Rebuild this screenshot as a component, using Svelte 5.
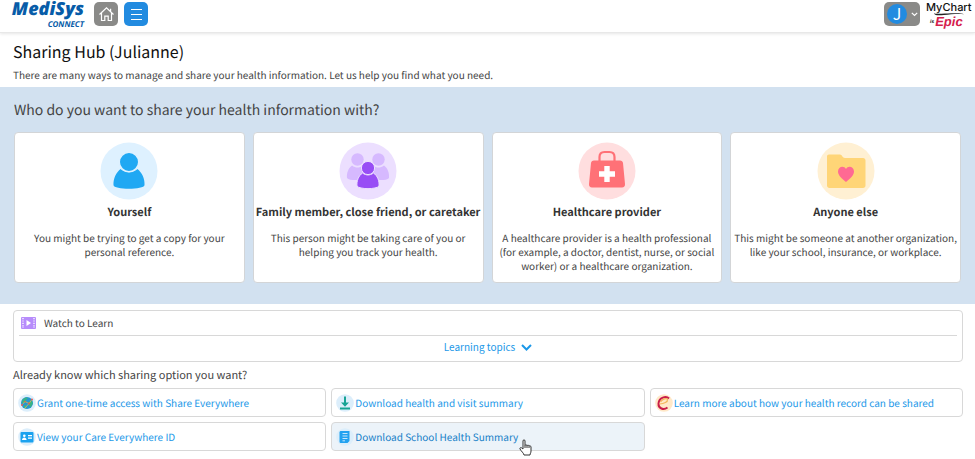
<script lang="ts">
  type Icon = 'self' | 'family' | 'provider' | 'folder';

  interface Audience {
    icon: Icon;
    title: string;
    text: string;
  }

  interface Option {
    icon: string;
    label: string;
    active?: boolean;
  }

  const audiences: Audience[] = [
    {
      icon: 'self',
      title: 'Yourself',
      text: 'You might be trying to get a copy for your personal reference.'
    },
    {
      icon: 'family',
      title: 'Family member, close friend, or caretaker',
      text: 'This person might be taking care of you or helping you track your health.'
    },
    {
      icon: 'provider',
      title: 'Healthcare provider',
      text: 'A healthcare provider is a health professional (for example, a doctor, dentist, nurse, or social worker) or a healthcare organization.'
    },
    {
      icon: 'folder',
      title: 'Anyone else',
      text: 'This might be someone at another organization, like your school, insurance, or workplace.'
    }
  ];

  const options: Option[] = [
    { icon: 'globe', label: 'Grant one-time access with Share Everywhere' },
    { icon: 'download', label: 'Download health and visit summary' },
    { icon: 'record', label: 'Learn more about how your health record can be shared' },
    { icon: 'card', label: 'View your Care Everywhere ID' },
    { icon: 'document', label: 'Download School Health Summary', active: true }
  ];

  let topicsOpen = $state(false);
</script>

<header class="topbar">
  <a class="brand" href="#home" aria-label="MediSys Connect">
    <span class="brand-name">MediSys</span>
    <span class="brand-sub">CONNECT</span>
  </a>
  <button class="icon-button home" aria-label="Home">
    <svg width="17" height="17" viewBox="0 0 17 17" fill="none" stroke="#fff" stroke-width="1.2">
      <path d="M1.5 8.5 8.5 1.8l7 6.7M3.5 7v7.5h3.3v-4.3h3.4v4.3h3.3V7M12.6 5.2V2.8" />
    </svg>
  </button>
  <button class="icon-button menu" aria-label="Menu">
    <svg width="13" height="13" viewBox="0 0 13 13" fill="none" stroke="#fff" stroke-width="1.2">
      <path d="M1 1.5h11M1 6.5h11M1 11.5h11" />
    </svg>
  </button>
  <button class="account" aria-label="Account menu">
    <span class="avatar">J</span>
    <svg width="7" height="5" viewBox="0 0 7 5" fill="none" stroke="#fff" stroke-width="1.2">
      <path d="m.8.8 2.7 2.7L6.2.8" />
    </svg>
  </button>
  <a class="mychart" href="#mychart" aria-label="MyChart is Epic">
    <span class="mychart-name">MyChart</span>
    <svg class="swoosh" width="44" height="3" viewBox="0 0 44 3">
      <path d="M8 0c1 1.500 10 .6 17 .3 6-.3 11-.2 13 .9-7-.6-14 .2-20 .8-6 .6-10 .6-10-2z" fill="#222" />
    </svg>
    <span class="mychart-tag"><span class="mychart-is">is</span><span class="mychart-epic">Epic</span></span>
  </a>
</header>

<main>
  <section class="intro">
    <h1>Sharing Hub (Julianne)</h1>
    <p>There are many ways to manage and share your health information. Let us help you find what you need.</p>
  </section>

  <section class="audience">
    <h2>Who do you want to share your health information with?</h2>
    <div class="cards">
      {#each audiences as item (item.icon)}
        <a class="card" href="#{item.icon}">
          <svg width="58" height="58" viewBox="0 0 58 58">
            {#if item.icon === 'self'}
              <circle cx="29" cy="29" r="28.5" fill="#def1ff" />
              <path d="M20.5 27c5 4.400 12 4.400 17 0 4.500 3.500 7.500 10 7 16-.2 5-31 5-31 0-.4-6 2.500-12.500 7-16z" fill="#20a8f3" />
              <circle cx="29" cy="20" r="9.700" fill="#20a8f3" stroke="#def1ff" stroke-width="1.400" />
            {:else if item.icon === 'family'}
              <circle cx="29" cy="29" r="28.5" fill="#ecdfff" />
              <g fill="#d6b9ff">
                <circle cx="18.500" cy="17.500" r="6.200" />
                <circle cx="39.500" cy="17.500" r="6.200" />
                <path d="M13 23.500c4 2.700 7 2.700 11 0l5 5 5-5c4 2.700 7 2.700 11 0 4 3 5.500 8 5 12.500-2 2.500-10 2.500-13 1.500H21c-3 1-11 1-13-1.500-.5-4.500 1-9.500 5-12.500z" />
              </g>
              <path d="M23.500 31c3.500 2.600 7.500 2.600 11 0 4 2.700 6 8 5.500 13-2 3.500-20 3.500-22 0-.5-5 1.500-10.300 5.500-13z" fill="#984df5" stroke="#ecdfff" stroke-width="1" />
              <circle cx="29" cy="26" r="6.600" fill="#984df5" stroke="#ecdfff" stroke-width="1" />
            {:else if item.icon === 'provider'}
              <circle cx="29" cy="29" r="28.5" fill="#ffdedf" />
              <path d="M21.500 19v-4c0-3 2-5 5-5h5c3 0 5 2 5 5v4" fill="none" stroke="#ff7177" stroke-width="2.200" />
              <path d="M16 18.500h26c1.800 0 2.700 1 3 2.500l2 21c.2 2-1 3.500-3 3.500H14c-2 0-3.200-1.500-3-3.500l2-21c.3-1.500 1.200-2.500 3-2.500z" fill="#ff7177" />
              <path d="M26.300 24h5.400v5.300H37v5.400h-5.300V40h-5.400v-5.300H21v-5.400h5.300z" fill="#fff" />
            {:else}
              <circle cx="29" cy="29" r="28.5" fill="#fff0d3" />
              <path d="M12 12.500h11c2 0 2.500 3.500 5 3.500h18c1.500 0 2.500 1 2.500 2.500v25c0 1.500-1 2.500-2.500 2.500H12.500c-1.500 0-2.500-1-2.500-2.500v-29c0-1.200.8-2 2-2z" fill="#ffd577" />
              <path d="M29 40c-4-3.500-8-6.500-8-10.500 0-5 6-6.300 8-2.500 2-3.800 8-2.500 8 2.500 0 4-4 7-8 10.500z" fill="#ff6a93" />
            {/if}
          </svg>
          <h3>{item.title}</h3>
          <p>{item.text}</p>
        </a>
      {/each}
    </div>
  </section>

  <section class="learn">
    <div class="learn-head">
      <svg width="15" height="12" viewBox="0 0 15 12">
        <rect width="15" height="12" rx="1" fill="#b78cfb" />
        <path d="M2 1v10M13 1v10" stroke="#fff" stroke-width="1.300" stroke-dasharray="1.200 1.200" />
        <path d="M5.500 3v6l4.500-3z" fill="#fff" />
      </svg>
      <span>Watch to Learn</span>
    </div>
    <button class="topics" aria-expanded={topicsOpen} onclick={() => (topicsOpen = !topicsOpen)}>
      Learning topics
      <svg width="11" height="7" viewBox="0 0 11 7" fill="none" stroke="#1c98e8" stroke-width="2">
        <path d="m1 1 4.500 4.500L10 1" />
      </svg>
    </button>
  </section>

  <section class="options">
    <h2>Already know which sharing option you want?</h2>
    <div class="option-grid">
      {#each options as option (option.icon)}
        <a class="option" class:active={option.active} href="#{option.icon}">
          <svg width="18" height="18" viewBox="0 0 18 18">
            <circle cx="9" cy="9" r="8.800" fill={option.icon === 'record' ? '#ffe8c8' : '#dceefb'} />
            {#if option.icon === 'globe'}
              <circle cx="9" cy="9" r="6" fill="#2596d1" />
              <path d="M4.500 5.500 8 3.200l1.800 1.300-2 1.500.8 2-3 1.500-1.800-.8zM10.500 8l3-2 1.300 3.500-2 3.800-2.300-2zM6 11l3 1-.5 2.500-2.500-.8z" fill="#39b385" />
              <path d="m4 11 3-3.500 4 2 3-4M7 14l4-4.500" fill="none" stroke="#efb456" stroke-width=".7" />
              <g fill="#e9574f"><circle cx="4" cy="11" r=".9" /><circle cx="7" cy="7.500" r=".8" /><circle cx="11" cy="9.500" r=".9" /><circle cx="14" cy="5.500" r=".9" /></g>
            {:else if option.icon === 'download'}
              <path d="M8 2.500h2v6h3l-4 4.300-4-4.300h3zM4 13.500h10v2H4z" fill="#16a394" />
            {:else if option.icon === 'record'}
              <path d="M14 4.500C11 1.500 4 3.500 3.500 9.500c-.3 5 5 7 9 4" fill="none" stroke="#c91e48" stroke-width="2" />
              <path d="M4.500 10C9 9.500 13 8 12.500 5.500 12 3.500 7 5 5.500 8" fill="none" stroke="#f3b65b" stroke-width="1.200" />
            {:else if option.icon === 'card'}
              <rect x="2.500" y="4" width="13" height="10.500" rx="1" fill="#1ba2ef" />
              <circle cx="6.300" cy="7.800" r="1.300" fill="#fff" />
              <path d="M4 12c0-3.500 4.600-3.500 4.600 0zM10 7h4v1.300h-4zM10 9.500h4v1.300h-4z" fill="#fff" />
            {:else}
              <path d="M5 3h8.500v10l-2 2H5c-1 0-1.500-.5-1.500-1.500V4.500C3.500 3.500 4 3 5 3z" fill="#22a2f0" />
              <path d="M6.500 5.500h5M6.500 8h5M6.500 10.500h5M6.500 12.800h2.500" stroke="#c5e7fc" stroke-width="1" />
            {/if}
          </svg>
          <span class="option-label">{option.label}</span>
          {#if option.active}
            <svg class="pointer" width="13" height="17" viewBox="0 0 13 17">
              <path d="M4 10V2c0-1.600 2-1.600 2 0v4.500c.2-1 2-1 2 .3.300-1 2-.8 2 .4.400-.8 2-.5 2 .8v4c0 2-1 2.500-1 4H5c0-1.500-3-4-4-6-.5-1.200 1-2 2-.8zM6 6.500V9M8 6.800V9M10 7.200V9" fill="#fff" stroke="#333" stroke-width="1" />
            </svg>
          {/if}
        </a>
      {/each}
    </div>
  </section>
</main>

<style>
  :global(body) {
    margin: 0;
    background: #fff;
    color: #444;
    font-family: "Noto Sans CJK SC", "Open Sans", sans-serif;
    font-size: 10px;
    line-height: 14px;
    text-rendering: geometricPrecision;
  }

  h1, h2, h3, p {
    margin: 0;
    font-weight: 400;
  }

  a {
    color: inherit;
    text-decoration: none;
  }

  svg {
    display: block;
    flex: none;
  }

  button {
    border: 0;
    padding: 0;
    font: inherit;
    cursor: pointer;
  }

  .topbar {
    display: flex;
    align-items: flex-start;
    gap: 6px;
    height: 30px;
    padding: 2px 5px 0 12px;
    border-bottom: 1px solid #e8e8e8;
    box-shadow: 0 1px 3px #e6e6e6;
  }

  .brand {
    display: flex;
    flex-direction: column;
    align-items: flex-end;
    gap: 4px;
    width: 72px;
    margin-right: 4px;
    color: #075ca8;
    font-family: "Noto Sans", sans-serif;
    font-style: italic;
    font-weight: 700;
  }

  .brand-name {
    font-size: 18px;
    font-weight: 900;
    line-height: 15px;
  }

  .brand-sub {
    font-size: 8px;
    line-height: 8px;
  }

  .icon-button {
    display: flex;
    align-items: center;
    justify-content: center;
    width: 24px;
    height: 24px;
    border-radius: 5px;
  }

  .home {
    background: #8a8a88;
  }

  .menu {
    background: #228be0;
  }

  .account {
    display: flex;
    align-items: center;
    gap: 4px;
    width: 36px;
    height: 24px;
    margin-left: auto;
    padding-left: 3px;
    border-radius: 5px;
    background: #8a8a88;
  }

  .avatar {
    width: 20px;
    height: 20px;
    border-radius: 50%;
    background: #228be0;
    color: #fff;
    font-size: 16px;
    line-height: 18px;
    text-align: center;
  }

  .mychart {
    display: flex;
    flex-direction: column;
    width: 44px;
    color: #111;
  }

  .mychart-name {
    font: 500 11px/11px Inter, sans-serif;
  }

  .mychart-tag {
    display: flex;
    align-items: center;
    gap: 1px;
    padding-left: 4px;
    font-family: "Liberation Sans", sans-serif;
    font-style: italic;
    font-weight: 700;
  }

  .mychart-is {
    font-size: 5px;
    line-height: 6px;
  }

  .mychart-epic {
    color: #d5204c;
    font-size: 13px;
    font-weight: 700;
    line-height: 11px;
  }

  .intro {
    padding: 6px 13px 5px;
  }

  h1 {
    color: #111;
    font-size: 16px;
    line-height: 24px;
  }

  .intro p {
    margin-top: 5px;
  }

  .audience {
    padding: 11px 14px 21px;
    background: #d2e1f0;
  }

  .audience h2 {
    font-size: 14px;
    line-height: 24px;
  }

  .cards {
    display: grid;
    grid-template-columns: repeat(4, minmax(0, 1fr));
    gap: 8px;
    margin-top: 10px;
  }

  .card {
    display: flex;
    flex-direction: column;
    align-items: center;
    padding: 9px 2px;
    border: 1px solid #d3d5d7;
    border-radius: 4px;
    background: #fff;
    text-align: center;
  }

  .card h3 {
    margin: 3px 0 10px;
    color: #333;
    font-size: 11px;
    font-weight: 600;
    line-height: 18px;
    white-space: nowrap;
  }

  .learn {
    margin: 6px 12px 0 13px;
    padding: 0 5px 3px;
    border: 1px solid #d8d8d8;
    border-radius: 4px;
  }

  .learn-head {
    display: flex;
    align-items: center;
    gap: 8px;
    height: 24px;
    padding-left: 2px;
    border-bottom: 1px solid #d8d8d8;
  }

  .topics {
    display: flex;
    align-items: center;
    justify-content: center;
    gap: 6px;
    width: 100%;
    height: 22px;
    background: none;
    color: #1c98e8;
  }

  .options {
    padding: 3px 12px 8px 13px;
  }

  .options h2 {
    font-size: 11px;
    line-height: 20px;
  }

  .option-grid {
    display: grid;
    grid-template-columns: repeat(3, 1fr);
    gap: 5px;
    margin-top: 3px;
  }

  .option {
    position: relative;
    display: flex;
    align-items: center;
    gap: 1px;
    height: 27px;
    padding-left: 4px;
    border: 1px solid #d8d8d8;
    border-radius: 4px;
    color: #1c98e8;
  }

  .option.active {
    background: #ecf3f9;
    color: #1680c8;
  }

  .pointer {
    position: absolute;
    top: 16px;
    left: 187px;
  }
</style>
